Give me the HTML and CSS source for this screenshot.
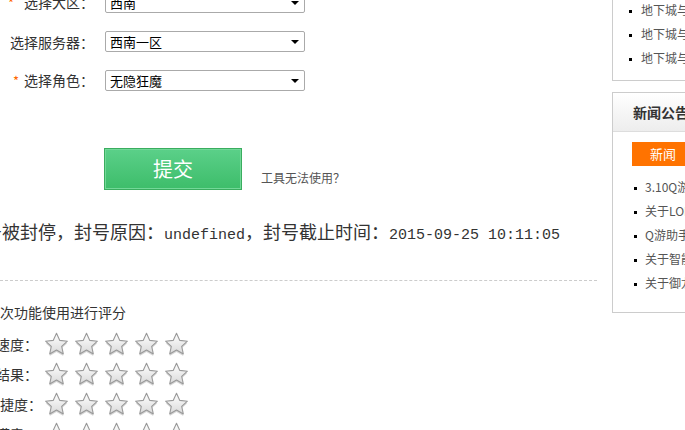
FILE: index.html
```html
<html>
    <head>
        <title>账号解封查询</title>
        <meta charset="utf-8">
        <link rel="stylesheet" href="styles.css">
    </head>
    <body>
        <svg class="defs" width="0" height="0">
            <defs>
                <linearGradient id="starfill" x1="0" y1="0" x2="0" y2="1">
                    <stop offset="0" stop-color="#ffffff"/>
                    <stop offset="1" stop-color="#d9d9d9"/>
                </linearGradient>
                <symbol id="star" viewBox="0 0 25 25">
                    <path d="M12.5 2.3 L15.8 9.4 L23.4 10.2 L17.7 15.3 L19.3 22.9 L12.5 19 L5.7 22.9 L7.3 15.3 L1.6 10.2 L9.2 9.4 Z" fill="#d6d6d6" transform="translate(0 1)"/>
                    <path d="M12.5 1.3 L15.8 8.4 L23.4 9.2 L17.7 14.3 L19.3 21.9 L12.5 18 L5.7 21.9 L7.3 14.3 L1.6 9.2 L9.2 8.4 Z" fill="url(#starfill)" stroke="#999" stroke-width="1.1" stroke-linejoin="round"/>
                </symbol>
            </defs>
        </svg>
        <div class="page">
            <div class="main">
                <form class="bind">
                    <div class="row">
                        <label class="lbl"><span class="req wide">*</span>选择大区：</label>
                        <span class="sel"><select><option>西南</option></select></span>
                    </div>
                    <div class="row">
                        <label class="lbl">选择服务器：</label>
                        <span class="sel"><select><option>西南一区</option></select></span>
                    </div>
                    <div class="row">
                        <label class="lbl"><span class="req">*</span>选择角色：</label>
                        <span class="sel"><select><option>无隐狂魔</option></select></span>
                    </div>
                    <div class="actions">
                        <button type="button" class="submit">提交</button>
                        <a class="help" href="#">工具无法使用？</a>
                    </div>
                </form>

                <p class="msg">账号被封停，封号原因：<span class="en">undefined</span>，封号截止时间：<span class="en">2015-09-25 10:11:05</span></p>

                <div class="rate">
                    <h3>对本次功能使用进行评分</h3>
                    <div class="star-row">
                        <span class="rlbl">响应速度：</span>
                        <span class="stars"><svg><use href="#star"/></svg><svg><use href="#star"/></svg><svg><use href="#star"/></svg><svg><use href="#star"/></svg><svg><use href="#star"/></svg></span>
                    </div>
                    <div class="star-row">
                        <span class="rlbl">处理结果：</span>
                        <span class="stars"><svg><use href="#star"/></svg><svg><use href="#star"/></svg><svg><use href="#star"/></svg><svg><use href="#star"/></svg><svg><use href="#star"/></svg></span>
                    </div>
                    <div class="star-row">
                        <span class="rlbl">操作便捷度：</span>
                        <span class="stars"><svg><use href="#star"/></svg><svg><use href="#star"/></svg><svg><use href="#star"/></svg><svg><use href="#star"/></svg><svg><use href="#star"/></svg></span>
                    </div>
                    <div class="star-row">
                        <span class="rlbl">整体满意：</span>
                        <span class="stars"><svg><use href="#star"/></svg><svg><use href="#star"/></svg><svg><use href="#star"/></svg><svg><use href="#star"/></svg><svg><use href="#star"/></svg></span>
                    </div>
                </div>
            </div>

            <div class="side">
                <div class="box links">
                    <ul>
                        <li>地下城与勇士账号解封</li>
                        <li>地下城与勇士角色找回</li>
                        <li>地下城与勇士装备找回</li>
                    </ul>
                </div>
                <div class="box news">
                    <div class="box-hd">新闻公告</div>
                    <div class="tab">新闻</div>
                    <ul>
                        <li>3.10Q游戏助手更新公告</li>
                        <li>关于LOL自动解封功能上线</li>
                        <li>Q游助手新版本发布说明</li>
                        <li>关于智能客服功能调整</li>
                        <li>关于御龙在天解封服务</li>
                    </ul>
                </div>
            </div>
        </div>
    </body>
</html>
```

FILE: styles.css
```css
body {margin:0;overflow:hidden;background:#fff;color:#333;font-family:"Noto Sans CJK SC", sans-serif;}
.defs {position:absolute;}
.page {display:flex;width:860px;}
.main {width:597px;flex:none;margin-right:15px;}
.side {width:240px;flex:none;}

/* form */
.bind {margin-top:-8px;}
.row {display:flex;align-items:center;height:21px;margin-bottom:18px;}
.lbl {width:94px;margin-right:11px;text-align:right;font-size:14px;line-height:20px;color:#333;white-space:nowrap;}
.req {color:#f60;font-size:13px;margin-right:5px;}
.req.wide {margin-right:10px;}
.sel {position:relative;display:block;width:200px;height:21px;}
.sel select {appearance:none;-webkit-appearance:none;box-sizing:border-box;width:100%;height:100%;margin:0;padding:0 0 0 4px;border:1px solid #aaa;border-radius:2px;background:#fff;color:#000;font:13px/19px "Noto Sans CJK SC", sans-serif;}
.sel::after {content:"";position:absolute;right:6px;top:9px;border-left:4px solid transparent;border-right:4px solid transparent;border-top:4px solid #000;}
.actions {display:flex;align-items:flex-end;margin:57px 0 0 104px;}
.submit {box-sizing:border-box;width:138px;height:42px;border:1px solid #3aad5f;box-shadow:inset 0 0 0 1px #72d898;background:linear-gradient(#5bd089, #3dbd6a);color:#fff;font:20px/38px "Noto Sans CJK SC", sans-serif;cursor:pointer;padding:0;}
.help {margin:0 0 4px 19px;font-size:12px;line-height:16px;color:#555;text-decoration:none;}

/* result */
.msg {margin:29px 0 0 -34px;font-size:18px;line-height:24px;color:#333;white-space:nowrap;}
.msg .en {font-family:"Liberation Mono", monospace;font-size:15px;}

/* rating */
.rate {margin-top:32px;border-top:1px dashed #ccc;}
.rate h3 {margin:21px 0 7px -28px;font-size:14px;font-weight:normal;line-height:20px;color:#333;white-space:nowrap;}
.star-row {display:flex;align-items:center;height:30px;}
.rlbl {width:80px;margin:0 6px 0 -42px;text-align:right;font-size:14px;line-height:20px;white-space:nowrap;}
.stars {display:flex;gap:5px;}
.stars svg {width:25px;height:25px;}

/* sidebar */
.box {border:1px solid #ccc;border-right:0;}
.box ul {margin:0;list-style:none;}
.box li {font-size:12px;line-height:24px;color:#555;white-space:nowrap;}
.box li::before {content:"";display:inline-block;width:3px;height:3px;background:#000;vertical-align:middle;margin-right:9px;}
.links {margin-top:-20px;border-top:0;}
.links ul {padding:18px 0 10px 16px;}
.news {margin-top:11px;}
.box-hd {height:38px;padding-left:20px;border-bottom:1px solid #ddd;background:linear-gradient(#fff, #ededed);font-size:14px;font-weight:bold;line-height:38px;color:#333;}
.tab {width:62px;height:24px;margin:10px 0 0 19px;background:#ff7300;color:#fff;font-size:13px;line-height:24px;text-align:center;}
.news ul {padding:9px 0 17px 21px;}
.news li::before {margin-right:8px;}
```
